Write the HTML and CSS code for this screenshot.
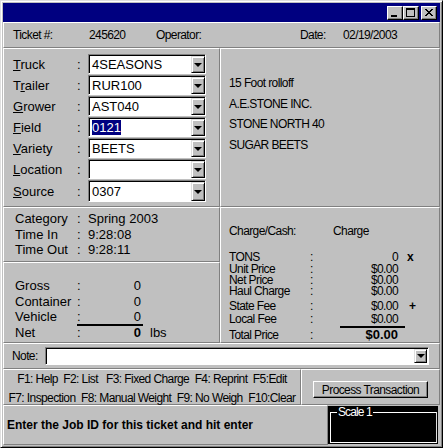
FILE: index.html
```html
<!DOCTYPE html>
<html>
<head>
<meta charset="utf-8">
<link rel="stylesheet" href="styles.css">
</head>
<body>
<div class="window">
  <div class="titlebar">
    <div class="tbtn"><svg width="14" height="12" viewBox="0 0 14 12"><rect x="3" y="8" width="6" height="2" fill="#000"/></svg></div>
    <div class="tbtn"><svg width="14" height="12" viewBox="0 0 14 12"><rect x="2.5" y="1.5" width="8" height="8" fill="none" stroke="#000"/><rect x="2" y="1" width="9" height="2" fill="#000"/></svg></div>
    <div class="tbtn close"><svg width="14" height="12" viewBox="0 0 14 12"><path d="M3 2 L10 9 M4 2 L11 9 M10 2 L3 9 M11 2 L4 9" stroke="#000" stroke-width="1"/></svg></div>
  </div>

  <div class="panel ticket nw">
    <span class="t-lbl">Ticket #:</span>
    <span class="t-num">245620</span>
    <span class="t-op">Operator:</span>
    <span class="t-date">Date:</span>
    <span>02/19/2003</span>
  </div>

  <div class="row mid">
    <div class="panel fields">
      <div class="frow"><span class="flbl"><u>T</u>ruck</span><span class="fcol">:</span><div class="combo"><span class="cval">4SEASONS</span><span class="dd"><i class="arr"></i></span></div></div>
      <div class="frow"><span class="flbl">T<u>r</u>ailer</span><span class="fcol">:</span><div class="combo"><span class="cval">RUR100</span><span class="dd"><i class="arr"></i></span></div></div>
      <div class="frow"><span class="flbl"><u>G</u>rower</span><span class="fcol">:</span><div class="combo"><span class="cval">AST040</span><span class="dd"><i class="arr"></i></span></div></div>
      <div class="frow"><span class="flbl"><u>F</u>ield</span><span class="fcol">:</span><div class="combo"><span class="cval"><span class="sel">0121</span></span><span class="dd"><i class="arr"></i></span></div></div>
      <div class="frow"><span class="flbl"><u>V</u>ariety</span><span class="fcol">:</span><div class="combo"><span class="cval">BEETS</span><span class="dd"><i class="arr"></i></span></div></div>
      <div class="frow"><span class="flbl"><u>L</u>ocation</span><span class="fcol">:</span><div class="combo"><span class="cval"></span><span class="dd"><i class="arr"></i></span></div></div>
      <div class="frow src"><span class="flbl"><u>S</u>ource</span><span class="fcol">:</span><div class="combo"><span class="cval">0307</span><span class="dd"><i class="arr"></i></span></div></div>
    </div>
    <div class="panel info nw">
      <div class="iline">15 Foot rolloff</div>
      <div class="iline">A.E.STONE INC.</div>
      <div class="iline">STONE NORTH 40</div>
      <div class="iline">SUGAR BEETS</div>
    </div>
  </div>

  <div class="row lower">
    <div class="lcol">
      <div class="panel cat">
        <div class="crow"><span class="clbl">Category</span><span class="ccol">:</span><span>Spring 2003</span></div>
        <div class="crow"><span class="clbl">Time In</span><span class="ccol">:</span><span>9:28:08</span></div>
        <div class="crow"><span class="clbl">Time Out</span><span class="ccol">:</span><span>9:28:11</span></div>
      </div>
      <div class="panel weights">
        <div class="wrow"><span class="clbl">Gross</span><span class="wcol">:</span><span class="wval">0</span></div>
        <div class="wrow"><span class="clbl">Container</span><span class="wcol">:</span><span class="wval">0</span></div>
        <div class="wrow"><span class="clbl">Vehicle</span><span class="wcol">:</span><span class="wval">0</span></div>
        <div class="wrow net"><span class="clbl">Net</span><span class="netbox"><span class="wcol">:</span><span class="wval b">0</span></span><span class="lbs">lbs</span></div>
      </div>
    </div>
    <div class="panel charges nw">
      <div class="cc"><span class="cclbl">Charge/Cash:</span><span>Charge</span></div>
      <div class="prow tons"><span class="plbl">TONS</span><span class="pcol">:</span><span class="pval">0</span><span class="pmark">x</span></div>
      <div class="prow"><span class="plbl">Unit Price</span><span class="pcol">:</span><span class="pval">$0.00</span></div>
      <div class="prow"><span class="plbl">Net Price</span><span class="pcol">:</span><span class="pval">$0.00</span></div>
      <div class="prow"><span class="plbl">Haul Charge</span><span class="pcol">:</span><span class="pval">$0.00</span></div>
      <div class="prow h15"><span class="plbl">State Fee</span><span class="pcol">:</span><span class="pval">$0.00</span><span class="pmark plus">+</span></div>
      <div class="prow h12"><span class="plbl">Local Fee</span><span class="pcol">:</span><span class="pval">$0.00</span></div>
      <div class="totline"></div>
      <div class="prow tot"><span class="plbl">Total Price</span><span class="pcol">:</span><span class="pval totval">$0.00</span></div>
    </div>
  </div>

  <div class="panel note">
    <span class="nlbl nw">Note:</span>
    <div class="nbox"><span class="dd small"><i class="arr"></i></span></div>
  </div>

  <div class="row fkeys">
    <div class="panel keys nw">
      <div class="kline">F1: Help&nbsp; F2: List&nbsp;&nbsp; F3: Fixed Charge&nbsp; F4: Reprint&nbsp; F5:Edit</div>
      <div class="kline">F7: Inspection&nbsp; F8: Manual Weight&nbsp; F9: No Weigh&nbsp; F10:Clear</div>
    </div>
    <div class="panel action">
      <div class="btn nw">Process Transaction</div>
    </div>
  </div>

  <div class="row status">
    <div class="panel msg">Enter the Job ID for this ticket and hit enter</div>
    <div class="scale">
      <div class="sframe"><span class="slbl nw">Scale 1</span></div>
    </div>
  </div>
</div>
</body>
</html>
```
FILE: styles.css
```css
html, body {
  margin: 0;
  padding: 0;
  background: #c0c0c0;
}
body {
  font-family: "Liberation Sans", Arial, sans-serif;
  font-size: 13px;
  color: #000;
}
/* condensed-looking system text */
.nw {
  font-size: 12px;
  letter-spacing: -0.6px;
}

.window {
  width: 443px;
  height: 448px;
  box-sizing: border-box;
  border: 1px solid;
  border-color: #dfdfdf #000 #000 #dfdfdf;
  box-shadow: inset 1px 1px #fff, inset -1px -1px #808080;
  padding: 2px;
  display: flex;
  flex-direction: column;
  background: #c0c0c0;
}
.titlebar {
  height: 19px;
  flex-shrink: 0;
  background: #000080;
  display: flex;
  justify-content: flex-end;
  align-items: center;
  padding-right: 3px;
}
.tbtn {
  width: 16px;
  height: 14px;
  box-sizing: border-box;
  background: #c0c0c0;
  border: 1px solid;
  border-color: #fff #000 #000 #fff;
  box-shadow: inset -1px -1px #808080;
  display: flex;
}
.tbtn svg { display: block; }
.tbtn.close { margin-left: 2px; }

.panel {
  box-sizing: border-box;
  border: 1px solid;
  border-color: #fff #808080 #808080 #fff;
}
.row { display: flex; flex-shrink: 0; }
.row > * { flex-shrink: 0; }

/* ticket row */
.ticket {
  height: 26px;
  flex-shrink: 0;
  display: flex;
  align-items: center;
  padding-left: 9px;
}
.ticket span { flex-shrink: 0; }
.t-lbl { width: 76px; }
.t-num { width: 67px; }
.t-op { width: 144px; }
.t-date { width: 43px; }

/* middle */
.mid { height: 159px; }
.fields {
  width: 217px;
  padding: 5px 0 0 9px;
}
.frow {
  display: flex;
  align-items: center;
  height: 20px;
  margin-bottom: 1px;
}
.frow.src { height: 22px; }
.flbl { width: 64px; flex-shrink: 0; }
.fcol { width: 11px; flex-shrink: 0; }
.combo {
  width: 118px;
  flex-shrink: 0;
  height: 100%;
  box-sizing: border-box;
  border: 1px solid;
  border-color: #808080 #fff #fff #808080;
  box-shadow: inset 1px 1px #000;
  background: #fff;
  display: flex;
  padding: 1px 0 0 1px;
}
.cval {
  flex: 1;
  display: flex;
  align-items: center;
  padding-left: 2px;
}
.sel {
  background: #000080;
  color: #fff;
}
.dd {
  width: 14px;
  flex-shrink: 0;
  box-sizing: border-box;
  background: #c0c0c0;
  border: 1px solid;
  border-color: #dfdfdf #000 #000 #dfdfdf;
  box-shadow: inset 1px 1px #fff, inset -1px -1px #808080;
  display: flex;
  align-items: center;
  justify-content: center;
}
.arr {
  width: 0;
  height: 0;
  border-left: 4px solid transparent;
  border-right: 4px solid transparent;
  border-top: 4px solid #000;
}
.info {
  flex: 1 1 auto !important;
  padding: 24px 0 0 8px;
}
.iline { height: 20.5px; line-height: 20px; }

/* lower */
.lower { height: 136px; }
.lcol {
  width: 217px;
  display: flex;
  flex-direction: column;
}
.cat {
  height: 55px;
  flex-shrink: 0;
  padding: 3px 0 0 11px;
}
.crow { display: flex; line-height: 15.5px; }
.crow > *, .wrow > *, .prow > *, .cc > * { flex-shrink: 0; }
.clbl { width: 62px; }
.ccol { width: 11px; }
.weights {
  flex: 1;
  padding: 15px 0 0 11px;
}
.wrow { display: flex; line-height: 15.5px; height: 15.5px; }
.wcol { width: 11px; }
.wval { width: 53px; text-align: right; }
.netbox {
  display: flex;
  width: 66px;
  border-top: 2px solid #000;
  line-height: 13.5px;
  margin-top: -1px;
}
.b { font-weight: bold; }
.lbs { margin-left: 7px; }

.charges {
  flex: 1 1 auto !important;
  padding: 16px 0 0 8px;
}
.cc { display: flex; line-height: 14px; margin-bottom: 12px; }
.cclbl { width: 104px; }
.prow { display: flex; line-height: 11px; height: 11px; }
.prow.tons { height: 14px; line-height: 14px; }
.prow.h15 { height: 15px; line-height: 19px; }
.prow.h12 { height: 12px; line-height: 14px; }
.plbl { width: 81px; }
.pcol { width: 8px; }
.pval { width: 80px; text-align: right; }
.pmark { margin-left: 9px; font-weight: bold; }
.plus { margin-left: 11px; }
.totline {
  height: 2px;
  width: 65px;
  background: #000;
  margin: 2px 0 0 111px;
}
.prow.tot { line-height: 14px; height: 14px; }
.totval {
  font-weight: bold;
  font-size: 13px;
  letter-spacing: 0;
}

/* note */
.note {
  height: 26px;
  flex-shrink: 0;
  display: flex;
  align-items: center;
  padding: 0 10px 0 8px;
}
.nlbl { width: 33px; flex-shrink: 0; }
.nbox {
  flex: 1;
  height: 18px;
  box-sizing: border-box;
  border: 1px solid;
  border-color: #808080 #fff #fff #808080;
  box-shadow: inset 1px 1px #000;
  background: #fff;
  display: flex;
  justify-content: flex-end;
  padding: 1px;
}
.dd.small { width: 13px; }

/* function keys */
.fkeys { height: 36px; }
.keys {
  width: 298px;
  display: flex;
  flex-direction: column;
  align-items: center;
  justify-content: center;
  padding-top: 3px;
  line-height: 19px;
  white-space: nowrap;
}
.action {
  flex: 1 1 auto !important;
  display: flex;
  align-items: center;
  justify-content: center;
  padding-top: 5px;
}
.btn {
  width: 115px;
  height: 17px;
  box-sizing: border-box;
  border: 1px solid;
  border-color: #fff #000 #000 #fff;
  box-shadow: inset -1px -1px #808080;
  display: flex;
  align-items: center;
  justify-content: center;
}

/* status */
.status { flex: 1; }
.msg {
  width: 325px;
  display: flex;
  align-items: center;
  padding-left: 3px;
  font-weight: bold;
  font-size: 12px;
}
.scale {
  flex: 1 1 auto !important;
  background: #000;
  margin: 1px 2px 1px 0;
  padding: 6px 1px 1px 2px;
  display: flex;
}
.sframe {
  flex: 1;
  border: 1px solid #fff;
  border-right-color: #dfdfdf;
  padding-left: 6px;
}
.slbl {
  display: inline-block;
  color: #fff;
  background: #000;
  letter-spacing: -0.9px;
  line-height: 12px;
  margin-top: -7px;
  padding: 0 1px;
  vertical-align: top;
}
```
